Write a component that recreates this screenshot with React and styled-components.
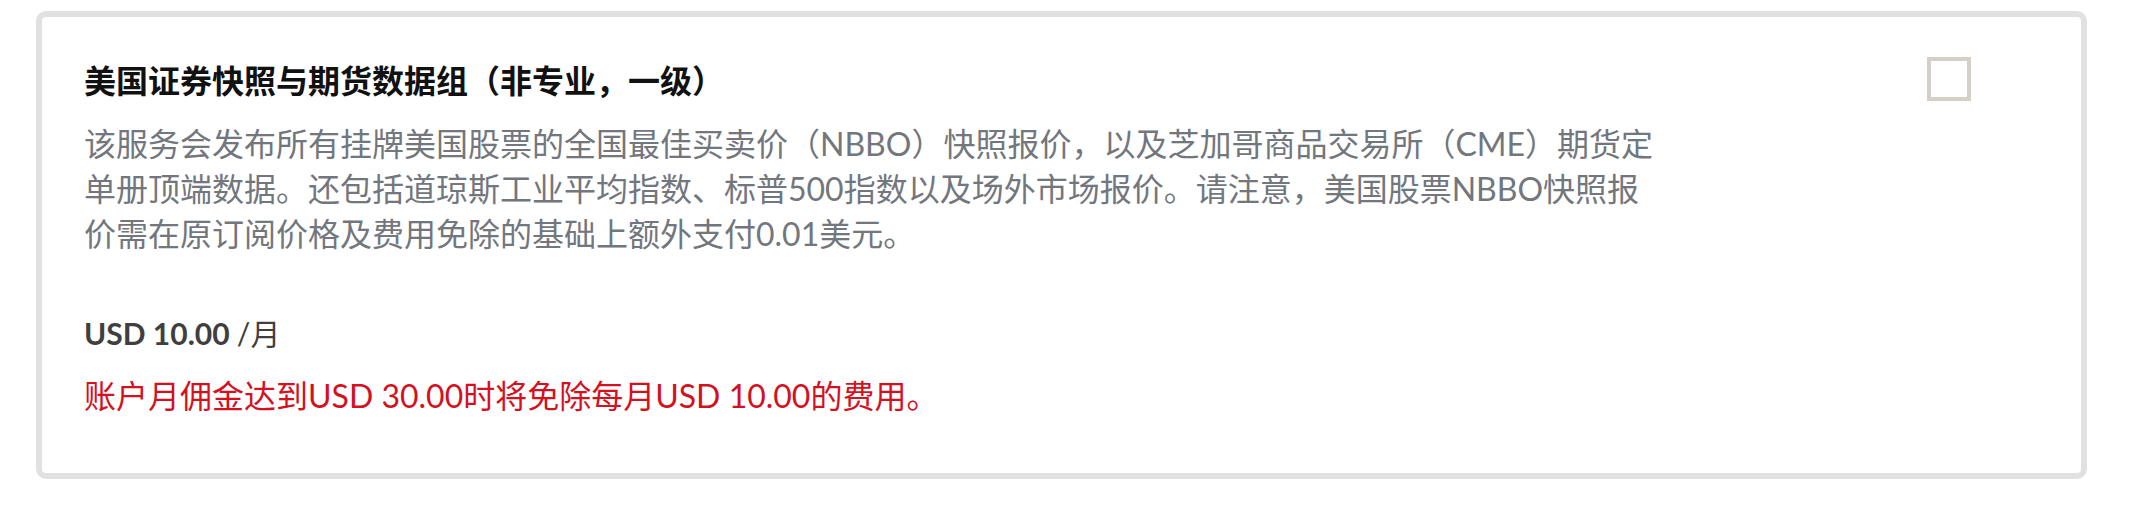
import React, { useState } from 'react'
import styled, { createGlobalStyle } from 'styled-components'

const GlobalStyle = createGlobalStyle`
body {
  margin: 0;
  background: #fff;
  font-family: Lato, "Noto Sans CJK SC", sans-serif;
}
`

const Page = styled.div`
padding: 11px 53px 37px 36px;
`

const Card = styled.div`
display: flex;
justify-content: space-between;
align-items: flex-start;
border: 6px solid #e1e1e1;
border-radius: 10px;
padding: 41px 110px 56px 42px;
min-height: 468px;
box-sizing: border-box;
`

const Body = styled.div`
display: flex;
flex-direction: column;
`

const Title = styled.h3`
margin: 0;
font-size: 32px;
line-height: 42px;
font-weight: 700;
color: #111;
font-family: "Noto Sans CJK SC", sans-serif;
`

const Desc = styled.p`
margin: 21px 0 0;
width: 1575px;
font-size: 32px;
line-height: 45px;
color: #72767d;
`

const Price = styled.div`
margin-top: 57px;
font-size: 30px;
line-height: 40px;
color: #3f3f3f;
font-weight: 700;

span {
  font-weight: 400;
}
`

const Waiver = styled.div`
margin-top: 22px;
font-size: 32px;
line-height: 42px;
color: #d4111f;
`

const Check = styled.button`
width: 44px;
height: 44px;
margin-top: -1px;
padding: 0;
flex-shrink: 0;
border: 4px solid ${props => props.checked ? '#d4111f' : '#d4cfc8'};
background: ${props => props.checked ? '#d4111f' : '#fff'};
cursor: pointer;
`

const App = () => {
    const [checked, setChecked] = useState(false)

    return (
        <Page>
            <GlobalStyle />
            <Card>
                <Body>
                    <Title>美国证券快照与期货数据组（非专业，一级）</Title>
                    <Desc>
                        该服务会发布所有挂牌美国股票的全国最佳买卖价（NBBO）快照报价，以及芝加哥商品交易所（CME）期货定单册顶端数据。还包括道琼斯工业平均指数、标普500指数以及场外市场报价。请注意，美国股票NBBO快照报价需在原订阅价格及费用免除的基础上额外支付0.01美元。
                    </Desc>
                    <Price>USD 10.00 <span>/月</span></Price>
                    <Waiver>账户月佣金达到USD 30.00时将免除每月USD 10.00的费用。</Waiver>
                </Body>
                <Check checked={checked} onClick={() => setChecked(!checked)} />
            </Card>
        </Page>
    )
}

export default App
